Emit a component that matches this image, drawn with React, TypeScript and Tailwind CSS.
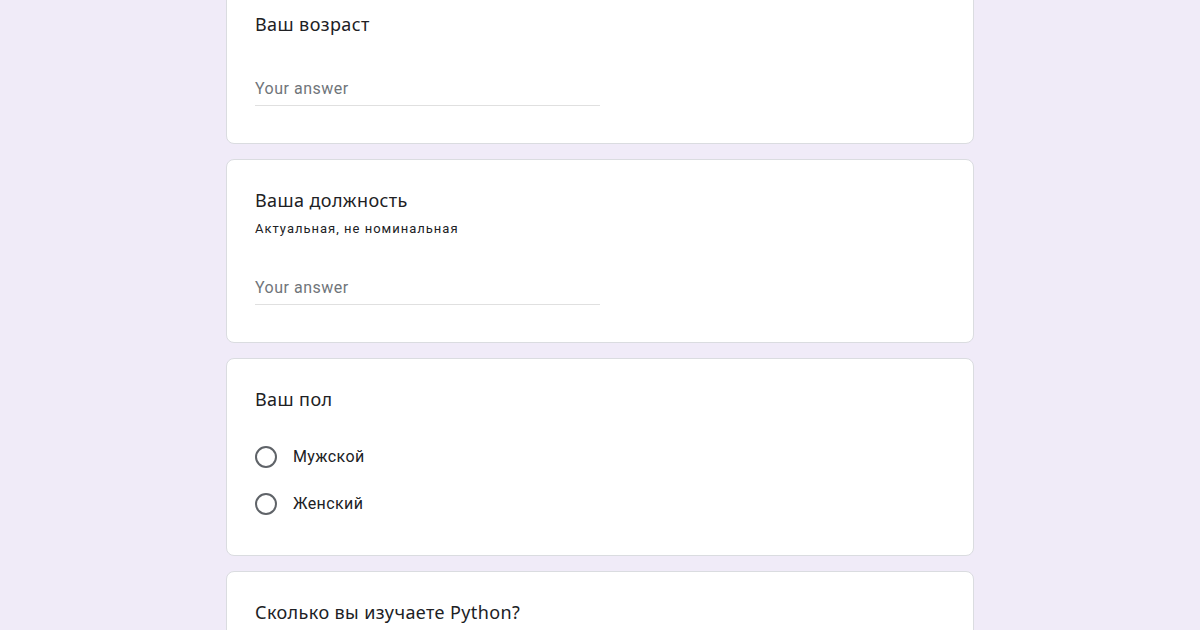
const TextQuestion = ({ title, hint }: { title: string; hint?: string }) => (
  <div className="bg-white border border-[#dadce0] rounded-lg px-[28px] pt-[28px] pb-[37px]">
    <p className="text-[18px] leading-[24px] text-[#202124] tracking-[0.4px]">{title}</p>
    {hint && (
      <p className="mt-[7px] text-[13px] leading-[20px] text-[#202124] tracking-[1px] font-[Roboto,sans-serif]">{hint}</p>
    )}
    <div className={"w-1/2 border-b border-[#e0e0e0] pb-[4px] " + (hint ? "mt-[37px]" : "mt-[41px]")}>
      <p className="text-[16px] leading-[24px] text-[#70757a] tracking-[0.5px] font-[Roboto,sans-serif]">Your answer</p>
    </div>
  </div>
)

const App = () => {
  const options = ["Мужской", "Женский"]

  return (
    <div className="min-h-screen bg-[#f0ebf8] font-['Noto_Sans',sans-serif] overflow-hidden">
      <div className="w-[748px] mx-auto -mt-[17px] flex flex-col gap-[15px] pb-10">
        <TextQuestion title="Ваш возраст" />
        <TextQuestion title="Ваша должность" hint="Актуальная, не номинальная" />

        <div className="bg-white border border-[#dadce0] rounded-lg px-[28px] pt-[28px] pb-[28px]">
          <p className="text-[18px] leading-[24px] text-[#202124] tracking-[0.4px]">Ваш пол</p>
          <div className="mt-[22px] flex flex-col">
            {options.map((opt) => (
              <div key={opt} className="h-[47px] flex items-center gap-[16px]">
                <span className="w-[22px] h-[22px] rounded-full border-2 border-[#5f6368] shrink-0"></span>
                <span className="text-[16px] text-[#202124] tracking-[0.4px] font-[Roboto,sans-serif]">{opt}</span>
              </div>
            ))}
          </div>
        </div>

        <div className="bg-white border border-[#dadce0] rounded-lg px-[28px] pt-[28px] pb-[37px]">
          <p className="text-[18px] leading-[24px] text-[#202124] tracking-[0.4px]">Сколько вы изучаете Python?</p>
          <div className="w-1/2 border-b border-[#e0e0e0] pb-[4px] mt-[41px]">
            <p className="text-[16px] leading-[24px] text-[#70757a] tracking-[0.5px] font-[Roboto,sans-serif]">Your answer</p>
          </div>
        </div>
      </div>
    </div>
  )
}

export default App
